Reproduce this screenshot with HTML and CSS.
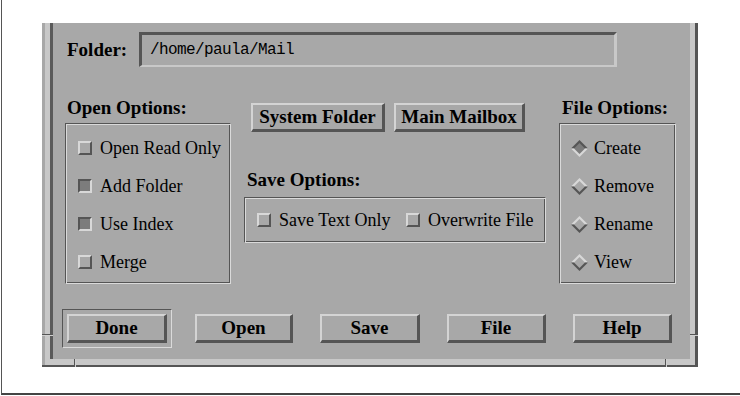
FILE: index.html
```html
<!DOCTYPE html>
<html>
<head>
<meta charset="utf-8">
<link rel="stylesheet" href="styles.css">
</head>
<body>
<div class="page">
  <div class="window">
    <div class="frame">
      <div class="content">
        <div class="folder-row">
          <span class="folder-label">Folder:</span>
          <div class="field">/home/paula/Mail</div>
        </div>
        <div class="options-row">
          <div class="col col-open">
            <div class="group-label">Open Options:</div>
            <div class="group tall">
              <div class="check"><span class="box"></span>Open Read Only</div>
              <div class="check"><span class="box on"></span>Add Folder</div>
              <div class="check"><span class="box on"></span>Use Index</div>
              <div class="check"><span class="box"></span>Merge</div>
            </div>
          </div>
          <div class="col col-mid">
            <div class="mid-buttons">
              <div class="btn btn-sys">System Folder</div>
              <div class="btn btn-main">Main Mailbox</div>
            </div>
            <div class="group-label save-label">Save Options:</div>
            <div class="group save-group">
              <div class="check save-first"><span class="box"></span>Save Text Only</div>
              <div class="check"><span class="box"></span>Overwrite File</div>
            </div>
          </div>
          <div class="col col-file">
            <div class="group-label file-label">File Options:</div>
            <div class="group tall">
              <div class="check"><svg class="diamond" viewBox="0 0 17 17" width="17" height="17"><polygon points="0,8.5 8.5,0 17,8.5" fill="#555"/><polygon points="0,8.5 8.5,17 17,8.5" fill="#d8d8d8"/><polygon points="3,8.5 8.5,3 14,8.5 8.5,14" fill="#7c7c7c"/></svg>Create</div>
              <div class="check"><svg class="diamond" viewBox="0 0 17 17" width="17" height="17"><polygon points="0,8.5 8.5,0 17,8.5" fill="#d8d8d8"/><polygon points="0,8.5 8.5,17 17,8.5" fill="#555"/><polygon points="3,8.5 8.5,3 14,8.5 8.5,14" fill="#a8a8a8"/></svg>Remove</div>
              <div class="check"><svg class="diamond" viewBox="0 0 17 17" width="17" height="17"><polygon points="0,8.5 8.5,0 17,8.5" fill="#d8d8d8"/><polygon points="0,8.5 8.5,17 17,8.5" fill="#555"/><polygon points="3,8.5 8.5,3 14,8.5 8.5,14" fill="#a8a8a8"/></svg>Rename</div>
              <div class="check"><svg class="diamond" viewBox="0 0 17 17" width="17" height="17"><polygon points="0,8.5 8.5,0 17,8.5" fill="#d8d8d8"/><polygon points="0,8.5 8.5,17 17,8.5" fill="#555"/><polygon points="3,8.5 8.5,3 14,8.5 8.5,14" fill="#a8a8a8"/></svg>View</div>
            </div>
          </div>
        </div>
        <div class="btn-row">
          <div class="default"><div class="btn w100">Done</div></div>
          <div class="btn w98">Open</div>
          <div class="btn w100">Save</div>
          <div class="btn w99">File</div>
          <div class="btn w99">Help</div>
        </div>
      </div>
    </div>
    <span class="notch notch-left"></span>
    <span class="notch notch-right"></span>
    <span class="notch notch-bl"></span>
    <span class="notch notch-br"></span>
  </div>
</div>
</body>
</html>
```

FILE: styles.css
```css
body {
  margin: 0;
  background: #ffffff;
  font-family: "Liberation Serif", "Times New Roman", serif;
  color: #000;
}

.page {
  margin-left: 1px;
  width: 698px;
  height: 370px;
  border-left: 1px solid #555;
  border-bottom: 2px solid #444;
  padding-top: 23px;
  padding-left: 40px;
  box-sizing: content-box;
}

.window {
  position: relative;
  width: 656px;
  height: 344px;
  box-sizing: border-box;
  background: #a8a8a8;
  padding-left: 3px;
  border-right: 3px solid #555;
  border-bottom: 2px solid #555;
}

.frame {
  height: 100%;
  box-sizing: border-box;
  border-left: 5px solid #c8c8c8;
  border-right: 5px solid #c8c8c8;
  border-bottom: 6px solid #c8c8c8;
}

.content {
  height: 100%;
  box-sizing: border-box;
  border-left: 3px solid #5a5a5a;
  display: flex;
  flex-direction: column;
}

.folder-row {
  display: flex;
  align-items: center;
  margin-top: 9px;
  padding-left: 14px;
  height: 35px;
}

.folder-label {
  width: 72px;
  font-weight: bold;
  font-size: 19px;
  white-space: nowrap;
}

.field {
  width: 478px;
  height: 35px;
  box-sizing: border-box;
  border-style: solid;
  border-width: 3px 3px 2px 3px;
  border-color: #555 #c8c8c8 #c8c8c8 #555;
  padding-left: 8px;
  font-family: "Liberation Mono", "Courier New", monospace;
  font-size: 16px;
  letter-spacing: -0.6px;
  display: flex;
  align-items: center;
}

.options-row {
  display: flex;
  margin-top: 31px;
}

.col-open {
  margin-left: 12px;
  width: 166px;
}

.col-mid {
  margin-left: 13px;
  width: 302px;
}

.col-file {
  margin-left: 13px;
  width: 117px;
}

.group-label {
  font-weight: bold;
  font-size: 19px;
  line-height: 20px;
  height: 20px;
  padding-left: 2px;
  margin-bottom: 5px;
  white-space: nowrap;
}

.file-label {
  padding-left: 3px;
}

.group {
  box-sizing: border-box;
  border: 1px solid;
  border-color: #555 #dadada #dadada #555;
  box-shadow: inset 1px 1px 0 #dadada, inset -1px -1px 0 #555;
}

.group.tall {
  height: 161px;
  padding-top: 5px;
  padding-left: 12px;
}

.col-file .group.tall {
  padding-left: 11px;
}

.check {
  display: flex;
  align-items: center;
  height: 38px;
  font-size: 18px;
  line-height: 20px;
  white-space: nowrap;
}

.box {
  width: 14px;
  height: 14px;
  box-sizing: border-box;
  border: 2px solid;
  border-color: #d8d8d8 #555 #555 #d8d8d8;
  background: #a8a8a8;
  margin-right: 8px;
  flex: none;
}

.box.on {
  border-color: #555 #d8d8d8 #d8d8d8 #555;
  background: #7c7c7c;
}

.diamond {
  display: block;
  margin-right: 6px;
  flex: none;
}

.mid-buttons {
  display: flex;
  gap: 9px;
  margin-top: 5px;
  padding-left: 7px;
}

.btn {
  height: 29px;
  box-sizing: border-box;
  border-style: solid;
  border-width: 2px 3px 3px 2px;
  border-color: #d4d4d4 #555 #555 #d4d4d4;
  display: flex;
  align-items: center;
  justify-content: center;
  font-weight: bold;
  font-size: 19px;
  white-space: nowrap;
}

.btn-sys { width: 134px; }
.btn-main { width: 131px; }

.save-label {
  margin-top: 38px;
  padding-left: 3px;
  margin-bottom: 7px;
}

.save-group {
  height: 46px;
  display: flex;
  align-items: center;
  padding-left: 12px;
}

.save-group .check {
  height: 44px;
}

.save-first {
  width: 149px;
}

.btn-row {
  display: flex;
  align-items: center;
  gap: 27px;
  margin-top: 25px;
  padding-left: 9px;
}

.default {
  width: 110px;
  height: 39px;
  box-sizing: border-box;
  border: 1px solid;
  border-color: #555 #dadada #dadada #555;
  padding: 4px;
  margin-right: -4px;
}

.w98 { width: 98px; }
.w99 { width: 99px; }
.w100 { width: 100px; }

.notch {
  position: absolute;
  background: #555;
}

.notch-left {
  left: 0;
  top: 311px;
  width: 11px;
  height: 1px;
  box-shadow: 0 1px 0 #d0d0d0;
}

.notch-right {
  left: 648px;
  top: 311px;
  width: 8px;
  height: 1px;
  box-shadow: 0 1px 0 #d0d0d0;
}

.notch-bl {
  left: 32px;
  top: 336px;
  width: 1px;
  height: 8px;
  box-shadow: 1px 0 0 #d0d0d0;
}

.notch-br {
  left: 623px;
  top: 336px;
  width: 1px;
  height: 8px;
  box-shadow: 1px 0 0 #d0d0d0;
}
```
